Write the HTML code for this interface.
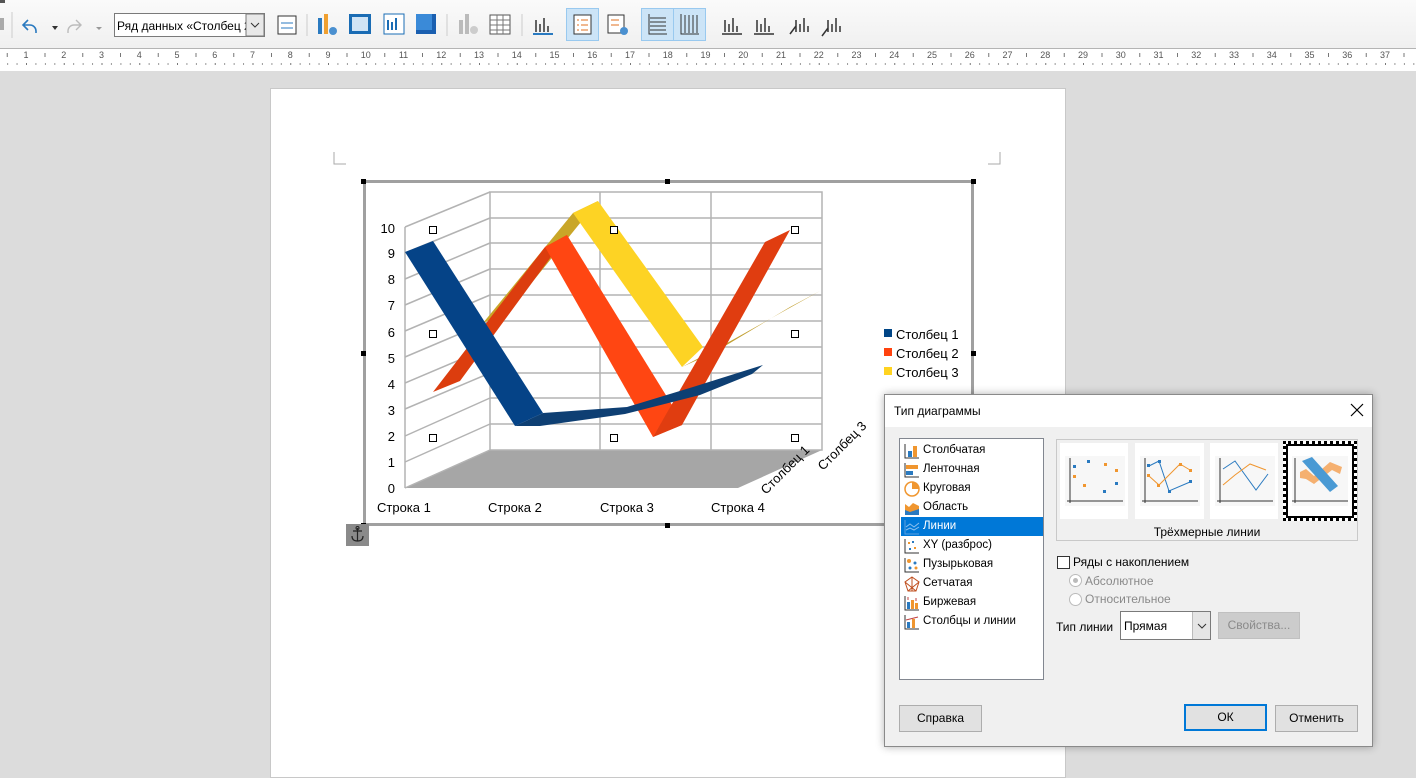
<!DOCTYPE html>
<html><head><meta charset="utf-8"><style>
*{margin:0;padding:0;box-sizing:border-box}
body{width:1416px;height:768px;overflow:hidden;background:#dcdcdc;font-family:"Liberation Sans","Noto Sans CJK SC",sans-serif;position:relative}
.abs{position:absolute}
.tb{left:0;top:0;width:1416px;height:49px;background:linear-gradient(#fafafa,#f0f0f0);border-bottom:1px solid #b4b4b4}
.ruler{left:0;top:49px;width:1416px;height:22px;background:#fff}
.dlg{left:884px;top:394px;width:489px;height:353px;background:#f0f0f0;border:1px solid #8a8a8a;box-shadow:0 0 8px rgba(0,0,0,.3);font-size:12px;color:#000}
.btn{position:absolute;height:27px;border:1px solid #adadad;background:#e1e1e1;font-size:12px;text-align:center;line-height:25px}
.li{position:absolute;left:1px;width:142px;height:19px;line-height:19px;padding-left:22px;font-size:11.5px}
.li svg{position:absolute;left:3px;top:2px}
</style></head><body>
<div class="abs tb"></div>
<svg class="abs" style="left:0;top:0" width="860" height="48">
 <rect x="0" y="0" width="5" height="3" fill="#555"/>
 <rect x="0" y="18" width="4" height="12" fill="#aaa"/>
 <line x1="12" y1="12" x2="12" y2="38" stroke="#ccc"/>
 <path d="M28 20 l-5 5 l5 5 M23 25 h7 a6 6 0 0 1 6 6 v2" fill="none" stroke="#2a7ac0" stroke-width="1.6"/>
 <path d="M52 26 l3 4 l3 -4z" fill="#333"/>
 <path d="M76 20 l5 5 l-5 5 M81 25 h-7 a6 6 0 0 0 -6 6 v2" fill="none" stroke="#bbb" stroke-width="1.4"/>
 <path d="M96 27 l3 3 l3 -3z" fill="#999"/>
 <rect x="114.5" y="13.5" width="150" height="23" fill="#fff" stroke="#7a7a7a"/>
 <text x="117" y="30" font-size="12" font-family="Liberation Sans">Ряд данных «Столбец 2»</text>
 <rect x="246" y="14" width="18" height="22" fill="#e8e8e8" stroke="#7a7a7a"/>
 <path d="M251 23 l4 4 l4 -4" fill="none" stroke="#333"/>
 <rect x="278" y="16" width="18" height="18" fill="#fff" stroke="#333"/><path d="M281 23h12M281 28h12" stroke="#2a7ac0"/>
 <line x1="307" y1="14" x2="307" y2="36" stroke="#ccc"/>
 <rect x="318" y="18" width="4" height="16" fill="#2a7ac0"/><rect x="324" y="14" width="4" height="20" fill="#f0a030"/><circle cx="333" cy="31" r="4" fill="#4a90d0"/>
 <rect x="349" y="14" width="22" height="20" fill="#1a6cb4"/><rect x="352" y="17" width="16" height="14" fill="#cfe3f5"/>
 <rect x="384" y="14" width="20" height="20" fill="#fff" stroke="#1a6cb4"/><path d="M388 30 v-10 M392 30v-8 M396 30v-12" stroke="#1a6cb4" stroke-width="2"/>
 <rect x="416" y="14" width="20" height="20" fill="#1a5fb0"/><rect x="416" y="14" width="16" height="16" fill="#3a8ad8"/>
 <line x1="447" y1="14" x2="447" y2="36" stroke="#ccc"/>
 <rect x="459" y="20" width="4" height="14" fill="#bbb"/><rect x="465" y="14" width="4" height="20" fill="#bbb"/><circle cx="474" cy="30" r="4" fill="#ccc"/>
 <rect x="490" y="15" width="20" height="19" fill="#fff" stroke="#555"/><path d="M490 20h20M490 25h20M490 30h20M497 15v19M503 15v19" stroke="#777"/>
 <line x1="522" y1="14" x2="522" y2="36" stroke="#ccc"/>
 <path d="M533 34h20 M536 32v-12M540 32v-8M544 32v-14M548 32v-6" stroke="#333" stroke-width="1.5"/><path d="M533 34h20" stroke="#2a7ac0" stroke-width="2"/>
 <rect x="566.5" y="8.5" width="32" height="32" fill="#cce4f7" stroke="#99c9ef"/>
 <rect x="574" y="15" width="17" height="19" fill="#fff" stroke="#333"/><path d="M577 20h2M581 20h7M577 25h2M581 25h7M577 30h2M581 30h7" stroke="#e07020"/>
 <rect x="608" y="15" width="16" height="18" fill="#fff" stroke="#333"/><path d="M611 20h8M611 25h8" stroke="#e07020"/><circle cx="624" cy="31" r="4" fill="#4a90d0"/>
 <rect x="641.5" y="8.5" width="32" height="32" fill="#cce4f7" stroke="#99c9ef"/>
 <rect x="673.5" y="8.5" width="32" height="32" fill="#cce4f7" stroke="#99c9ef"/>
 <path d="M649 14v20h18 M650 18h16M650 22h16M650 26h16M650 30h16" stroke="#333" fill="none"/>
 <path d="M681 14v20h18 M685 15v18M689 15v18M693 15v18M697 15v18" stroke="#333" fill="none"/>
 <g stroke="#333" stroke-width="1.5"><path d="M722 34h20M725 32v-12M729 32v-8M733 32v-14M737 32v-6"/><path d="M754 34h20M757 32v-12M761 32v-8M765 32v-14M769 32v-6"/><path d="M790 34l6-8M796 32v-12M800 32v-8M804 32v-14M808 32v-6"/><path d="M822 36l6-8M828 32v-12M832 32v-8M836 32v-14M840 32v-6"/></g>
</svg>
<div class="abs ruler"></div>
<svg class="abs" style="left:0;top:49px" width="1416" height="22" id="rul"></svg>
<div class="abs" style="left:270px;top:88px;width:796px;height:690px;background:#fff;border:1px solid #c8c8c8"></div>
<svg class="abs" style="left:0;top:0" width="1416" height="768">
 <path d="M334 152v12h12 M1000 152v12h-12" stroke="#aaa" fill="none"/>
 <rect x="364.5" y="181.5" width="608" height="343" fill="#fff" stroke="#a0a0a0" stroke-width="3"/>
 <polygon points="405,488 738,488 822,450 490,450" fill="#a6a6a6"/>
 <g stroke="#b3b3b3" stroke-width="1.5" fill="none">
  <rect x="490" y="192" width="332" height="258"/>
  <path d="M600 192v258M711 192v258"/>
  <path d="M405 227L490 192 M405 227V488"/>
 </g>
 <g stroke="#b3b3b3" stroke-width="1.5">
  <path d="M490 218h332M490 243h332M490 269h332M490 295h332M490 321h332M490 347h332M490 373h332M490 398h332M490 424h332"/>
  <path d="M405 253L490 218M405 279L490 243M405 305L490 269M405 331L490 295M405 357L490 321M405 383L490 347M405 409L490 373M405 436L490 398M405 462L490 424M405 488L490 450"/>
 </g>
 <polygon points="483,323 573,213 598,201 508,312" fill="#c9a628"/>
 <polygon points="682,367 727,343 820,291 790,307 715,352" fill="#c2a032"/>
 <polygon points="573,213 598,201 703,347 682,367" fill="#fdd324"/>
 <polygon points="433,392 460,381 567,235 545,247" fill="#dc3d0e"/>
 <polygon points="545,247 567,235 672,405 653,437" fill="#ff4612"/>
 <polygon points="653,437 672,405 682,425" fill="#e8400f"/>
 <polygon points="653,437 682,425 790,230 765,242" fill="#e03d10"/>
 <polygon points="515,426 543,413 627,407 693,387 763,365 752,374 700,395 625,414 540,426" fill="#0e3f73"/>
 <polygon points="405,252 433,241 543,413 515,426" fill="#054387"/>
 <g font-size="13" font-family="Liberation Sans" text-anchor="end">
  <text x="395" y="493">0</text><text x="395" y="467">1</text><text x="395" y="441">2</text><text x="395" y="415">3</text><text x="395" y="389">4</text><text x="395" y="363">5</text><text x="395" y="337">6</text><text x="395" y="310">7</text><text x="395" y="284">8</text><text x="395" y="258">9</text><text x="395" y="233">10</text>
 </g>
 <g font-size="13" font-family="Liberation Sans">
  <text x="377" y="512">Строка 1</text><text x="488" y="512">Строка 2</text><text x="600" y="512">Строка 3</text><text x="711" y="512">Строка 4</text>
  <text transform="translate(766,495) rotate(-45)">Столбец 1</text>
  <text transform="translate(823,471) rotate(-45)">Столбец 3</text>
  <rect x="884" y="329" width="8" height="8" fill="#004586"/><text x="896" y="339">Столбец 1</text>
  <rect x="884" y="348" width="8" height="8" fill="#ff420e"/><text x="896" y="358">Столбец 2</text>
  <rect x="884" y="367" width="8" height="8" fill="#ffd320"/><text x="896" y="377">Столбец 3</text>
 </g>
 <g fill="#fff" stroke="#000">
  <rect x="429.5" y="226.5" width="7" height="7"/><rect x="610.5" y="226.5" width="7" height="7"/><rect x="791.5" y="226.5" width="7" height="7"/>
  <rect x="429.5" y="330.5" width="7" height="7"/><rect x="791.5" y="330.5" width="7" height="7"/>
  <rect x="429.5" y="434.5" width="7" height="7"/><rect x="610.5" y="434.5" width="7" height="7"/><rect x="791.5" y="434.5" width="7" height="7"/>
 </g>
 <g fill="#000">
  <rect x="361" y="179" width="5" height="5"/><rect x="665" y="179" width="5" height="5"/><rect x="971" y="179" width="5" height="5"/>
  <rect x="361" y="351" width="5" height="5"/><rect x="971" y="351" width="5" height="5"/>
  <rect x="361" y="523" width="5" height="5"/><rect x="665" y="523" width="5" height="5"/>
 </g>
 <rect x="346" y="524" width="23" height="22" fill="#8a8a8a"/>
 <path d="M357.5 528v13M353 531h9M352 536q0 5 5.5 5q5.5 0 5.5-5" stroke="#222" fill="none" stroke-width="1.2"/><circle cx="357.5" cy="528" r="1.5" fill="none" stroke="#222"/>
</svg>

<div class="abs dlg">
 <div class="abs" style="left:0;top:0;width:487px;height:32px;background:#fff"></div>
 <div class="abs" style="left:9px;top:9px;font-size:12px">Тип диаграммы</div>
 <svg class="abs" style="left:465px;top:8px" width="14" height="14"><path d="M1 1L13 13M13 1L1 13" stroke="#000" stroke-width="1.2"/></svg>
 <div class="abs" style="left:14px;top:43px;width:145px;height:242px;background:#fff;border:1px solid #828790">
  <div class="li" style="top:2px"><svg width="16" height="16"><path d="M1 1v14h14" stroke="#333" fill="none"/><rect x="4" y="8" width="4" height="6" fill="#2a7ac0"/><rect x="9" y="3" width="4" height="11" fill="#f0962f"/></svg>Столбчатая</div>
  <div class="li" style="top:21px"><svg width="16" height="16"><path d="M1 1v14h14" stroke="#333" fill="none"/><rect x="2" y="3" width="12" height="4" fill="#f0962f"/><rect x="2" y="9" width="7" height="4" fill="#2a7ac0"/></svg>Ленточная</div>
  <div class="li" style="top:40px"><svg width="16" height="16"><circle cx="8" cy="8" r="7" fill="#fff" stroke="#f0962f" stroke-width="1.5"/><path d="M8 8V1a7 7 0 0 1 7 7z" fill="#f0962f"/></svg>Круговая</div>
  <div class="li" style="top:59px"><svg width="16" height="16"><path d="M1 15V4l4 3 4-4 6 3v9z" fill="#f0962f"/><path d="M1 15v-5l5 2 9-3v6z" fill="#2a7ac0"/></svg>Область</div>
  <div class="li" style="top:78px;background:#0078d7;color:#fff"><svg width="16" height="16"><path d="M1 1v14h14" stroke="#5aa0e0" fill="none"/><path d="M2 8l4-3 4 3 5-4M2 11l4-2 4 2 5-3" stroke="#8cc0ef" fill="none"/></svg>Линии</div>
  <div class="li" style="top:97px"><svg width="16" height="16"><path d="M1 1v14h14" stroke="#333" fill="none"/><g fill="#f0962f"><rect x="4" y="4" width="2" height="2"/><rect x="10" y="9" width="2" height="2"/></g><g fill="#2a7ac0"><rect x="8" y="3" width="2" height="2"/><rect x="5" y="10" width="2" height="2"/></g></svg>XY (разброс)</div>
  <div class="li" style="top:116px"><svg width="16" height="16"><path d="M1 1v14h14" stroke="#333" fill="none"/><circle cx="5" cy="4" r="2" fill="#f0962f"/><circle cx="11" cy="6" r="1.5" fill="#2a7ac0"/><circle cx="6" cy="11" r="1.5" fill="#2a7ac0"/><circle cx="12" cy="11" r="1.5" fill="#f0962f"/></svg>Пузырьковая</div>
  <div class="li" style="top:135px"><svg width="16" height="16"><path d="M8 1L15 6 12 15H4L1 6z M8 1v14M1 6l11 9M15 6L4 15" stroke="#c05020" fill="none"/></svg>Сетчатая</div>
  <div class="li" style="top:154px"><svg width="16" height="16"><path d="M1 1v14h14" stroke="#333" fill="none"/><rect x="3" y="7" width="3" height="7" fill="#2a7ac0"/><rect x="7" y="5" width="3" height="9" fill="#f0962f"/><rect x="11" y="8" width="3" height="6" fill="#f0962f"/><path d="M4 2v3M12 3v3" stroke="#c04040"/></svg>Биржевая</div>
  <div class="li" style="top:173px"><svg width="16" height="16"><path d="M1 1v14h14" stroke="#333" fill="none"/><rect x="3" y="8" width="3" height="6" fill="#2a7ac0"/><rect x="8" y="5" width="3" height="9" fill="#f0962f"/><path d="M2 6l12-3" stroke="#c04040"/></svg>Столбцы и линии</div>
 </div>
 <div class="abs" style="left:171px;top:44px;width:302px;height:102px;border:1px solid #c9c9c9;background:#f0f0f0"></div>
 <svg class="abs" style="left:175px;top:48px" width="296" height="80">
  <rect x="0" y="0" width="68" height="76" fill="#fff"/><rect x="75" y="0" width="69" height="76" fill="#fff"/><rect x="150" y="0" width="68" height="76" fill="#fff"/>
  <rect x="5" y="13" width="60" height="50" fill="#f7f7f7"/><rect x="80" y="13" width="60" height="50" fill="#f7f7f7"/><rect x="155" y="13" width="60" height="50" fill="#f7f7f7"/>
  <g stroke="#333" fill="none"><path d="M10 15v45M7 58h56"/><path d="M85 15v45M82 58h56"/><path d="M160 15v45M157 58h56"/></g>
  <g fill="#2a7ac0"><rect x="13" y="22" width="3" height="3"/><rect x="27" y="17" width="3" height="3"/><rect x="43" y="47" width="3" height="3"/><rect x="55" y="39" width="3" height="3"/></g>
  <g fill="#f0962f"><rect x="13" y="32" width="3" height="3"/><rect x="23" y="41" width="3" height="3"/><rect x="44" y="20" width="3" height="3"/><rect x="55" y="26" width="3" height="3"/></g>
  <path d="M89 23L99 18 109 48 130 39" stroke="#2a7ac0" fill="none"/><path d="M89 33L99 42 120 21 130 27" stroke="#f0962f" fill="none"/>
  <g fill="#2a7ac0"><rect x="87" y="21" width="3" height="3"/><rect x="98" y="17" width="3" height="3"/><rect x="108" y="47" width="3" height="3"/><rect x="129" y="37" width="3" height="3"/></g>
  <g fill="#f0962f"><rect x="87" y="31" width="3" height="3"/><rect x="97" y="41" width="3" height="3"/><rect x="119" y="20" width="3" height="3"/><rect x="129" y="26" width="3" height="3"/></g>
  <path d="M163 26L175 18 196 47 208 31" stroke="#2a7ac0" fill="none"/><path d="M163 42L175 32 190 21 206 27" stroke="#f0962f" fill="none"/>
 </svg>
 <div class="abs" style="left:398px;top:46px;width:74px;height:80px;background:#fff;border:3px dotted #000;outline:2px solid #000;outline-offset:-5px"></div>
 <svg class="abs" style="left:403px;top:51px" width="64" height="70">
  <rect x="4" y="10" width="56" height="50" fill="#f7f7f7"/><path d="M7 12v45M4 55h56" stroke="#333" fill="none"/>
  <polygon points="12,26 18,23 26,30 42,16 54,21 52,28 44,24 26,38 18,33 12,32" fill="#f5b070"/>
  <polygon points="14,15 24,11 50,40 42,46" fill="#4a9ad4"/>
 </svg>
 <div class="abs" style="left:171px;top:130px;width:302px;text-align:center;font-size:12px">Трёхмерные линии</div>
 <div class="abs" style="left:172px;top:161px;width:13px;height:13px;border:1px solid #333;background:#fff"></div>
 <div class="abs" style="left:188px;top:160px">Ряды с накоплением</div>
 <div class="abs" style="left:184px;top:179px;width:13px;height:13px;border:1px solid #bbb;border-radius:50%;background:#fff"><div style="margin:3px;width:5px;height:5px;border-radius:50%;background:#bbb"></div></div>
 <div class="abs" style="left:200px;top:179px;color:#8a8a8a">Абсолютное</div>
 <div class="abs" style="left:184px;top:198px;width:13px;height:13px;border:1px solid #bbb;border-radius:50%;background:#fff"></div>
 <div class="abs" style="left:200px;top:197px;color:#8a8a8a">Относительное</div>
 <div class="abs" style="left:171px;top:225px">Тип линии</div>
 <div class="abs" style="left:235px;top:216px;width:91px;height:29px;border:1px solid #7a7a7a;background:#fff;padding:7px 0 0 3px">Прямая</div>
 <div class="abs" style="left:307px;top:217px;width:18px;height:27px;background:#e5e5e5;border-left:1px solid #bbb"><svg width="18" height="27"><path d="M5 12l4 4 4-4" stroke="#333" fill="none"/></svg></div>
 <div class="btn" style="left:333px;top:217px;width:82px;background:#cccccc;border-color:#c0c0c0;color:#8a8a8a">Свойства...</div>
 <div class="btn" style="left:14px;top:310px;width:83px">Справка</div>
 <div class="btn" style="left:299px;top:309px;width:83px;border:2px solid #0078d7;line-height:23px">ОК</div>
 <div class="btn" style="left:390px;top:310px;width:83px">Отменить</div>
</div>
<script>
var r=document.getElementById('rul'),s='';
for(var i=0;i<=37;i++){var x=26+(i-1)*37.75;
 if(i>0)s+='<text x="'+x+'" y="9" font-size="9" fill="#555" text-anchor="middle" font-family="Liberation Sans">'+i+'</text>';
 s+='<rect x="'+(x+18.5)+'" y="4" width="1" height="4" fill="#777"/>';
 s+='<rect x="'+x+'" y="14" width="1" height="2" fill="#777"/><rect x="'+(x+9.4)+'" y="14" width="1" height="2" fill="#999"/><rect x="'+(x+18.9)+'" y="14" width="1" height="2" fill="#999"/><rect x="'+(x+28.3)+'" y="14" width="1" height="2" fill="#999"/>';}
r.innerHTML=s;
</script>
</body></html>
